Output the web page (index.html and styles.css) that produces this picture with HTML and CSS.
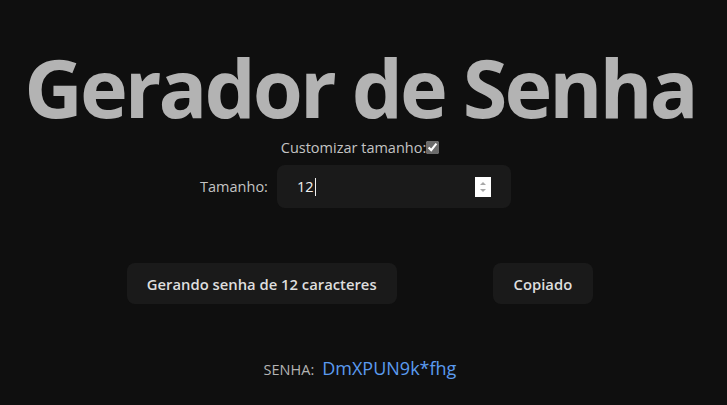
FILE: index.html
```html
<!DOCTYPE html>
<html lang="pt-BR">
<head>
<meta charset="utf-8">
<title>Gerador de Senha</title>
<link rel="stylesheet" href="styles.css">
</head>
<body>
<main class="app">
  <h1 class="title">Gerador de Senha</h1>
  <div class="custom">
    <label class="custom-label" for="custom">Customizar tamanho:</label><input id="custom" class="check" type="checkbox" checked>
  </div>
  <div class="size-row">
    <label class="size-label">Tamanho:</label>
    <div class="field">
      <span class="value">12</span><span class="caret"></span>
      <span class="spin">
        <svg width="16" height="20" viewBox="0 0 16 20"><rect width="16" height="20" fill="#fff"/><path d="M5 8 L8 5 L11 8 Z" fill="#a8a8a8"/><path d="M5 12 L8 15 L11 12 Z" fill="#a8a8a8"/></svg>
      </span>
    </div>
  </div>
  <div class="buttons">
    <button class="btn">Gerando senha de 12 caracteres</button>
    <button class="btn">Copiado</button>
  </div>
  <div class="result">
    <span class="result-label">SENHA:</span>
    <span class="password">DmXPUN9k*fhg</span>
  </div>
</main>
</body>
</html>
```
FILE: styles.css
```css
html, body {
  margin: 0;
  padding: 0;
  background: #0f0f0f;
}
body {
  font-family: "Open Sans", "Noto Sans", sans-serif;
  color: #dcdcdc;
}
.app {
  display: flex;
  flex-direction: column;
  align-items: center;
  padding-right: 7px;
}
.title {
  margin: 46px 0 0;
  font-size: 81px;
  line-height: 81px;
  font-weight: 700;
  color: #b3b3b3;
  letter-spacing: -3px;
  white-space: nowrap;
}
.custom {
  margin-top: 9px;
  display: flex;
  align-items: center;
  height: 22px;
}
.custom-label {
  font-size: 14.5px;
  color: #c4c4c4;
}
.check {
  margin: 0;
  width: 13px;
  height: 13px;
  accent-color: #6b6b6b;
}
.size-row {
  margin-top: 7px;
  display: flex;
  align-items: center;
  gap: 9px;
  margin-left: -9px;
}
.size-label {
  font-size: 14.5px;
  color: #c4c4c4;
}
.field {
  width: 234px;
  height: 43px;
  box-sizing: border-box;
  background: #1a1a1a;
  border-radius: 8px;
  display: flex;
  align-items: center;
  padding: 0 20px 0 20px;
}
.value {
  font-size: 14.5px;
  color: #f0f0f0;
}
.caret {
  width: 1px;
  height: 18px;
  background: #f0f0f0;
  margin-left: 1px;
}
.spin {
  margin-left: auto;
  display: flex;
}
.buttons {
  margin-top: 55px;
  display: flex;
  gap: 96px;
}
.btn {
  font-family: inherit;
  font-size: 14.8px;
  font-weight: 600;
  color: #dedede;
  background: #1a1a1a;
  border: 1px solid transparent;
  border-radius: 8px;
  height: 41px;
  padding: 0 19px;
}
.btn + .btn {
  padding: 0 20px;
}
.result {
  margin-top: 52px;
  display: flex;
  align-items: baseline;
  gap: 8px;
}
.result-label {
  font-size: 14.5px;
  color: #b4b4b4;
}
.password {
  font-size: 18px;
  color: #5b9bf0;
}
```
